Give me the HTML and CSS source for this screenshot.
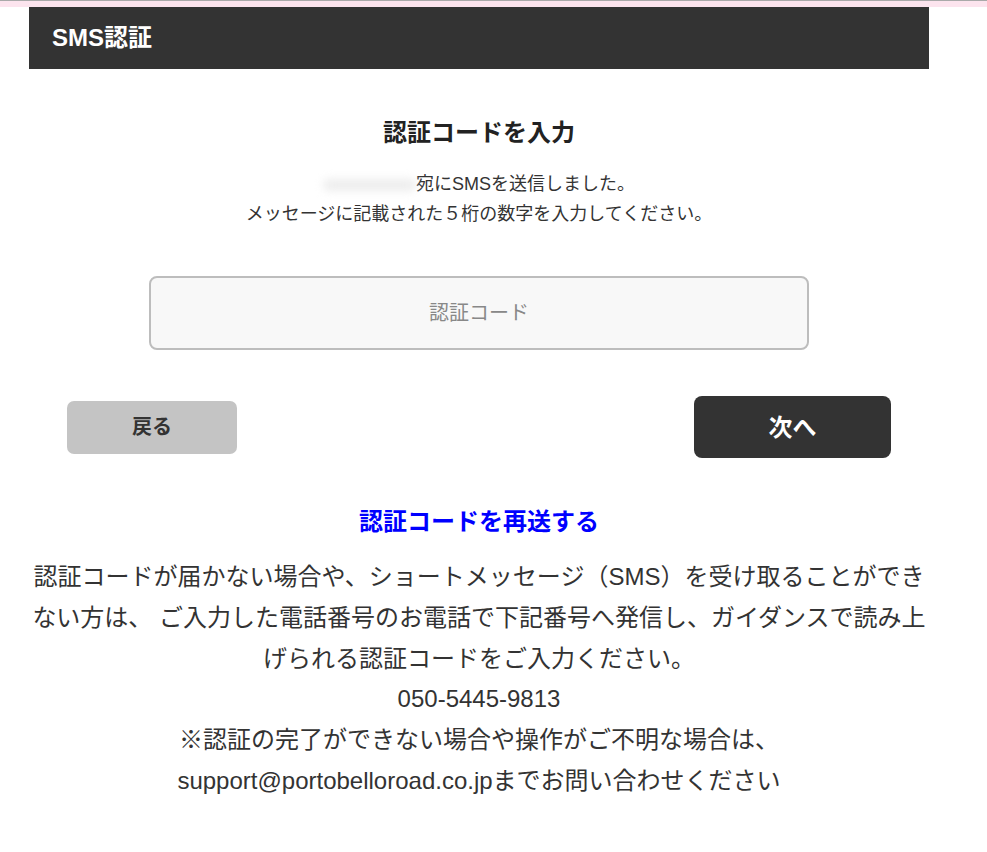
FILE: index.html
```html
<!DOCTYPE html>
<html lang="ja">
<head>
    <meta charset="UTF-8">
    <meta name="viewport" content="width=device-width, initial-scale=1.0">
    <title>SMS認証</title>
    <link rel="stylesheet" href="styles.css">
</head>
<body>
    <div class="top-strip"></div>
    <div class="page">
        <div class="page-header">SMS認証</div>

        <h2 class="title">認証コードを入力</h2>
        <p class="lead">
            <span class="masked-number"></span>宛にSMSを送信しました。<br>
            メッセージに記載された５桁の数字を入力してください。
        </p>

        <div class="code-field">
            <input type="text" class="code-input" placeholder="認証コード" />
        </div>

        <div class="button-row">
            <button class="back-button">戻る</button>
            <button class="next-button">次へ</button>
        </div>

        <a class="resend-link" href="#">認証コードを再送する</a>

        <p class="help-text">
            認証コードが届かない場合や、ショートメッセージ（SMS）を受け取ることができない方は、 ご入力した電話番号のお電話で下記番号へ発信し、ガイダンスで読み上げられる認証コードをご入力ください。<br>
            050-5445-9813<br>
            ※認証の完了ができない場合や操作がご不明な場合は、<br>
            support@portobelloroad.co.jpまでお問い合わせください
        </p>
    </div>
</body>
</html>
```

FILE: styles.css
```css
body {
    margin: 0;
    background: #fff;
    color: #333;
    font-family: "Liberation Sans", "Noto Sans CJK JP", sans-serif;
}
.top-strip {
    height: 6px;
    border-top: 1px solid #a9a9a9;
    background: #fce4ee;
}
.page {
    width: 900px;
    margin-left: 29px;
}
.page-header {
    height: 62px;
    line-height: 62px;
    padding-left: 23px;
    background: #333;
    color: #fff;
    font-size: 24px;
    font-weight: bold;
}
.title {
    margin: 47px 0 0;
    font-size: 24px;
    line-height: 34px;
    text-align: center;
    color: #222;
}
.lead {
    margin: 19px 0 0;
    font-size: 18px;
    line-height: 30px;
    text-align: center;
}
.masked-number {
    display: inline-block;
    width: 93px;
    height: 12px;
    vertical-align: middle;
    background: #ededed;
    border-radius: 6px;
    filter: blur(4px);
}
.code-field {
    margin-top: 47px;
    display: flex;
    justify-content: center;
}
.code-input {
    box-sizing: border-box;
    width: 660px;
    height: 74px;
    border: 2px solid #bdbdbd;
    border-radius: 8px;
    background: #f8f8f8;
    font-family: inherit;
    font-size: 20px;
    text-align: center;
    color: #333;
}
.code-input::placeholder {
    color: #888;
}
.button-row {
    margin-top: 46px;
    padding: 0 38px;
    display: flex;
    justify-content: space-between;
    align-items: center;
}
.back-button {
    width: 170px;
    height: 53px;
    padding-bottom: 5px;
    border: none;
    border-radius: 7px;
    background: #c4c4c4;
    color: #333;
    font-family: inherit;
    font-size: 20px;
    font-weight: bold;
}
.next-button {
    width: 197px;
    height: 62px;
    padding-bottom: 5px;
    border: none;
    border-radius: 8px;
    background: #333;
    color: #fff;
    font-family: inherit;
    font-size: 24px;
    font-weight: bold;
}
.resend-link {
    display: block;
    margin-top: 47px;
    font-size: 24px;
    line-height: 34px;
    font-weight: bold;
    text-align: center;
    color: #0000ff;
    text-decoration: none;
}
.help-text {
    margin: 18px 0 0;
    font-size: 24px;
    line-height: 40.8px;
    text-align: center;
}
```
